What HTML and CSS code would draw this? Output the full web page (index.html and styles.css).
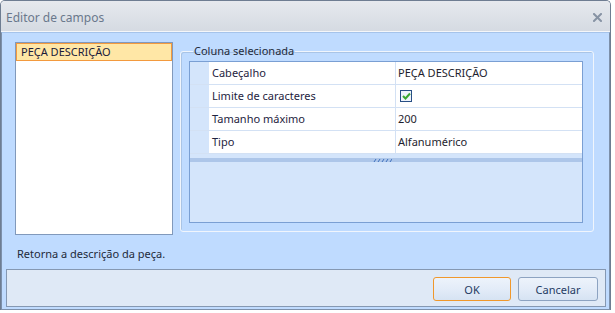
FILE: index.html
```html
<!DOCTYPE html>
<html lang="pt">
<head>
    <meta charset="UTF-8">
    <title>Editor de campos</title>
    <link rel="stylesheet" href="styles.css">
</head>
<body>
    <div class="window">
        <div class="titlebar">
            <span class="title">Editor de campos</span>
            <svg class="close" width="9" height="9" viewBox="0 0 9 9">
                <path d="M1 1 L8 8 M8 1 L1 8" stroke="#8793a4" stroke-width="2" stroke-linecap="square"/>
            </svg>
        </div>
        <div class="frame">
            <div class="main">
                <div class="field-list">
                    <div class="field selected">PEÇA DESCRIÇÃO</div>
                </div>
                <fieldset class="group">
                    <legend>Coluna selecionada</legend>
                    <div class="grid">
                        <div class="rows">
                            <div class="row">
                                <div class="gutter"></div>
                                <div class="label">Cabeçalho</div>
                                <div class="value">PEÇA DESCRIÇÃO</div>
                            </div>
                            <div class="row">
                                <div class="gutter"></div>
                                <div class="label">Limite de caracteres</div>
                                <div class="value">
                                    <span class="check">
                                        <svg width="9" height="8" viewBox="0 0 9 8">
                                            <path d="M1 4 L3.5 6.5 L8 1.5" fill="none" stroke="#3aa830" stroke-width="2"/>
                                        </svg>
                                    </span>
                                </div>
                            </div>
                            <div class="row">
                                <div class="gutter"></div>
                                <div class="label">Tamanho máximo</div>
                                <div class="value">200</div>
                            </div>
                            <div class="row">
                                <div class="gutter"></div>
                                <div class="label">Tipo</div>
                                <div class="value">Alfanumérico</div>
                            </div>
                        </div>
                        <div class="splitter">
                            <svg class="grip" width="19" height="3" viewBox="0 0 19 3">
                                <path d="M1 3 L3 0 M5 3 L7 0 M9 3 L11 0 M13 3 L15 0 M17 3 L19 0" stroke="#3d6fbd" stroke-width="1"/>
                            </svg>
                        </div>
                        <div class="help"></div>
                    </div>
                </fieldset>
            </div>
            <div class="status">Retorna a descrição da peça.</div>
            <div class="buttons">
                <button class="btn default">OK</button>
                <button class="btn">Cancelar</button>
            </div>
        </div>
    </div>
</body>
</html>
```

FILE: styles.css
```css
body {
    margin: 0;
    background-color: #ffffff;
    font-family: "Noto Sans", sans-serif;
    font-size: 11px;
    color: #1e1e1e;
}

.window {
    width: 609px;
    height: 309px;
    border: 1px solid #6e7d92;
    border-bottom: none;
    border-radius: 5px 5px 0 0;
    display: flex;
    flex-direction: column;
    overflow: hidden;
}

.titlebar {
    height: 28px;
    background: linear-gradient(#e6e9ee, #d5dae2);
    border-bottom: 1px solid #f4f6f9;
    display: flex;
    align-items: center;
    justify-content: space-between;
    padding: 2px 8px 0 5px;
}

.title {
    font-size: 12px;
    color: #6a788c;
}

.frame {
    flex: 1;
    background-color: #bfdbff;
    border: 1px solid #7d90aa;
    border-top-color: #a5c3ea;
    display: flex;
    flex-direction: column;
}

.main {
    display: flex;
    padding: 9px 15px 0 13px;
    gap: 7px;
}

.field-list {
    width: 156px;
    height: 191px;
    background-color: #ffffff;
    border: 1px solid #8199bb;
}

.field {
    height: 16px;
    line-height: 16px;
    padding-left: 4px;
}

.field.selected {
    background-color: #ffe7a6;
    border: 1px solid #f39a3e;
    color: #1b1b3a;
}

.group {
    flex: 1;
    margin: 0;
    padding: 3px 10px 9px 8px;
    border: 1px solid #f0f5fc;
    border-radius: 3px;
    box-shadow: inset 1px 1px 0 #a9c4e6;
    height: 174px;
    margin-top: 2px;
}

.group legend {
    padding: 0 1px;
    margin-left: 4px;
    line-height: 14px;
    color: #1e2a3a;
}

.grid {
    border: 1px solid #7a9fd3;
    background-color: #d4e5fb;
    display: flex;
    flex-direction: column;
    height: 160px;
}

.row {
    display: flex;
    height: 22px;
    border-bottom: 1px solid #d3e1f4;
    background-color: #ffffff;
}

.gutter {
    width: 19px;
    background-color: #d4e5fb;
}

.label {
    width: 183px;
    padding-left: 3px;
    line-height: 22px;
    border-right: 1px solid #d3e1f4;
    color: #1e2340;
}

.value {
    flex: 1;
    padding-left: 2px;
    line-height: 22px;
    display: flex;
    align-items: center;
    color: #1e1e2e;
}

.check {
    width: 10px;
    height: 10px;
    border: 1px solid #284f85;
    background-color: #eef4fc;
    display: flex;
    align-items: center;
    justify-content: center;
    margin-left: 2px;
}

.splitter {
    margin-top: 4px;
    height: 4px;
    background-color: #adc6e9;
    display: flex;
    justify-content: center;
    align-items: center;
}

.grip {
    margin-right: 8px;
}

.help {
    flex: 1;
}

.status {
    padding: 11px 0 0 15px;
    height: 23px;
    color: #1e2a3a;
}

.buttons {
    margin: 0 3px 2px 4px;
    flex: 1;
    background-color: #dfe9f6;
    border: 1px solid #8598b2;
    display: flex;
    justify-content: flex-end;
    align-items: flex-start;
    gap: 7px;
    padding: 7px 7px 0 0;
}

.btn {
    font-family: "Noto Sans", sans-serif;
    font-size: 11px;
    color: #1f3b63;
    width: 80px;
    height: 24px;
    border: 1px solid #8da3c1;
    border-radius: 3px;
    background: linear-gradient(#edf3fb, #e3ecf8 50%, #d6e3f3);
    padding: 0;
}

.btn.default {
    width: 78px;
    border-color: #f0982c;
}
```
